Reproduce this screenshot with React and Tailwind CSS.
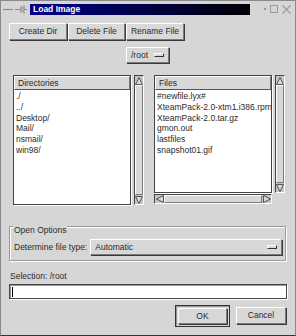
import React from 'react'

const bevelOut = 'border border-t-white border-l-white border-r-[#7a7a7a] border-b-[#7a7a7a]'
const bevelIn = 'border border-t-[#7a7a7a] border-l-[#7a7a7a] border-r-white border-b-white'

function Button({ children, className = '', spread = false }) {
  return (
    <div
      className={`flex items-center ${spread ? 'justify-between px-[4px]' : 'justify-center'} bg-[#d8d8d8] ${bevelOut} shadow-[1px_1px_0_#3a3a3a] text-[#2a2a2a] ${className}`}
    >
      {children}
    </div>
  )
}

function MenuMark() {
  return <span className={`w-[10px] h-[4px] ${bevelOut} border-r-[#333] border-b-[#333]`} />
}

function VScroll({ className = '' }) {
  return (
    <div className={`flex flex-col w-[10px] bg-[#c4c4c4] ${bevelIn} border-t-[#444] border-l-[#444] ${className}`}>
      <div className="h-[9px] flex items-center justify-center">
        <svg width="8" height="8" viewBox="0 0 8 8"><path d="M0.5 7.5 L4 0.5 L7.5 7.5 Z" fill="#d8d8d8" stroke="#555" strokeWidth="1" /></svg>
      </div>
      <div className={`flex-1 bg-[#d8d8d8] ${bevelOut}`} />
      <div className="h-[9px] flex items-center justify-center">
        <svg width="8" height="8" viewBox="0 0 8 8"><path d="M0.5 0.5 L4 7.5 L7.5 0.5 Z" fill="#d8d8d8" stroke="#555" strokeWidth="1" /></svg>
      </div>
    </div>
  )
}

function List({ title, items, width }) {
  return (
    <div className={`bg-white border border-[#444] shadow-[1px_1px_0_#fff] ${width} h-full flex flex-col overflow-hidden`}>
      <div className={`h-[14px] shrink-0 bg-[#d8d8d8] ${bevelOut} border-b-[#555] px-[3px] text-[8.5px] leading-[12px] text-[#2a2a2a]`}>{title}</div>
      <div className="px-[2px] pt-[1px] text-[8.5px] leading-[10.8px] text-[#2a2a2a] whitespace-nowrap">
        {items.map((it) => (
          <div key={it}>{it}</div>
        ))}
      </div>
    </div>
  )
}

export default function App() {
  return (
    <div
      className="w-[296px] h-[336px] bg-[#d6d6d6] border border-[#8a8a8a] border-b-[#333] flex flex-col"
      style={{ fontFamily: '"Liberation Sans", Arial, sans-serif' }}
    >
      {/* title bar */}
      <div className="h-[16px] flex items-center pl-[2px] pr-[4px] bg-[#d6d6d6]">
        <div className="flex items-center gap-[2px] w-[27px]">
          <svg width="10" height="10" viewBox="0 0 10 10"><path d="M0 5.5 H10" stroke="#8a8a8a" strokeWidth="1.2" /></svg>
          <svg width="12" height="10" viewBox="0 0 12 10"><path d="M0 5.5 H6 M6 2 V9 M9 1 V10 M6 4 H9 M6 7 H9 M9 5.5 H12" stroke="#8a8a8a" strokeWidth="1" fill="none" /></svg>
        </div>
        <div className="w-[220px] h-[11px] bg-gradient-to-r from-[#000088] via-[#00004a] to-[#000005] flex items-center px-[3px] text-white font-bold text-[8.5px] leading-none">
          Load Image
        </div>
        <div className="flex-1 flex items-center justify-end gap-[4px]">
          <div className="w-[2px] h-[2px] bg-[#9a9a9a]" />
          <div className="w-[8px] h-[8px] border border-[#9a9a9a]" />
          <svg width="9" height="9" viewBox="0 0 9 9"><path d="M0.5 0.5 L8.5 8.5 M8.5 0.5 L0.5 8.5" stroke="#9a9a9a" strokeWidth="1.1" /></svg>
        </div>
      </div>

      <div className="flex-1 flex flex-col px-[8px]">
        {/* top buttons */}
        <div className="flex mt-[6px] gap-[1px]">
          <Button className="w-[58px] h-[17px] text-[8.5px]">Create Dir</Button>
          <Button className="w-[57px] h-[17px] text-[8.5px]">Delete File</Button>
          <Button className="w-[58px] h-[17px] text-[8.5px]">Rename File</Button>
        </div>

        {/* path menu */}
        <div className="flex mt-[7px] pl-[117px]">
          <Button className="w-[43px] h-[16px] text-[8.5px]" spread>
            <span>/root</span>
            <MenuMark />
          </Button>
        </div>

        {/* lists */}
        <div className="flex mt-[12px] pl-[4px]">
          <div className="flex h-[130px]">
            <List title="Directories" items={['./', '../', 'Desktop/', 'Mail/', 'nsmail/', 'win98/']} width="w-[118px]" />
            <VScroll className="ml-[3px]" />
          </div>
          <div className="flex flex-col ml-[10px]">
            <div className="flex h-[118px]">
              <List
                title="Files"
                items={['#newfile.lyx#', 'XteamPack-2.0-xtm1.i386.rpm', 'XteamPack-2.0.tar.gz', 'gmon.out', 'lastfiles', 'snapshot01.gif']}
                width="w-[118px]"
              />
              <VScroll className="ml-[3px]" />
            </div>
            <div className={`flex h-[10px] w-[118px] mt-[1px] bg-[#c4c4c4] ${bevelIn} border-t-[#444] border-l-[#444]`}>
              <div className="w-[9px] flex items-center justify-center">
                <svg width="8" height="8" viewBox="0 0 8 8"><path d="M7.5 0.5 L0.5 4 L7.5 7.5 Z" fill="#d8d8d8" stroke="#555" /></svg>
              </div>
              <div className={`flex-1 bg-[#d8d8d8] ${bevelOut}`} />
              <div className="w-[9px] flex items-center justify-center">
                <svg width="8" height="8" viewBox="0 0 8 8"><path d="M0.5 0.5 L7.5 4 L0.5 7.5 Z" fill="#d8d8d8" stroke="#555" /></svg>
              </div>
            </div>
          </div>
        </div>

        {/* open options */}
        <div className="relative mt-[21px] mr-[1px] h-[35px] border border-[#9a9a9a] shadow-[inset_1px_1px_0_#fff,1px_1px_0_#fff]">
          <div className="absolute left-[3px] -top-[3px] px-[1px] bg-[#d6d6d6] text-[8.5px] leading-[12px] text-[#2a2a2a]">Open Options</div>
          <div className="flex items-center mt-[12px] ml-[4px] mr-[3px] gap-[3px]">
            <span className="text-[8.5px] text-[#2a2a2a] whitespace-nowrap">Determine file type:</span>
            <Button className="flex-1 h-[16px] text-[8.5px]" spread>
              <span>Automatic</span>
              <MenuMark />
            </Button>
          </div>
        </div>

        {/* selection */}
        <div className="mt-[9px] ml-[1px] text-[8.5px] leading-[12px] text-[#2a2a2a]">Selection: /root</div>
        <div className="mt-[2px] h-[15px] bg-white border border-[#444] shadow-[inset_1px_1px_0_#999,1px_1px_0_#fff] flex items-center px-[2px]">
          <div className="w-[1px] h-[10px] bg-black" />
        </div>

        {/* bottom buttons */}
        <div className="flex justify-end mt-[6px] gap-[6px] pr-[1px]">
          <div className="border border-[#333] p-[2px] shadow-[inset_1px_1px_0_#999]">
            <Button className="w-[49px] h-[16px] text-[8.5px]">OK</Button>
          </div>
          <Button className="w-[50px] h-[17px] text-[8.5px] mt-[2px]">Cancel</Button>
        </div>
      </div>
    </div>
  )
}
